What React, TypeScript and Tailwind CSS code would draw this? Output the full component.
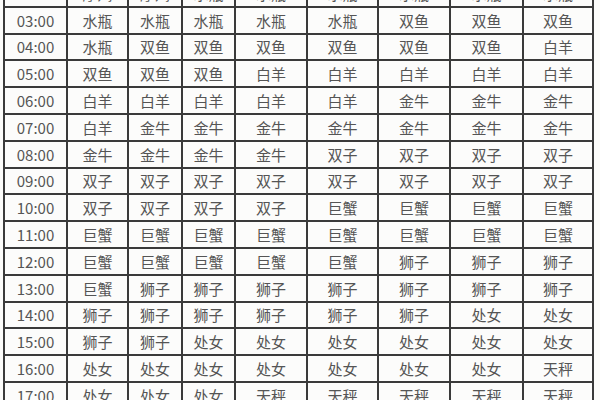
import React from "react";

const cols = ["w-[61px]", "w-[59px]", "w-[52px]", "w-[51px]", "w-[70px]", "w-[69px]", "w-[70px]", "w-[71px]", "w-[68px]"];

const rows: [string, string[]][] = [
  ["02:00", ["摩羯", "摩羯", "水瓶", "水瓶", "水瓶", "水瓶", "水瓶", "水瓶"]],
  ["03:00", ["水瓶", "水瓶", "水瓶", "水瓶", "水瓶", "双鱼", "双鱼", "双鱼"]],
  ["04:00", ["水瓶", "双鱼", "双鱼", "双鱼", "双鱼", "双鱼", "双鱼", "白羊"]],
  ["05:00", ["双鱼", "双鱼", "双鱼", "白羊", "白羊", "白羊", "白羊", "白羊"]],
  ["06:00", ["白羊", "白羊", "白羊", "白羊", "白羊", "金牛", "金牛", "金牛"]],
  ["07:00", ["白羊", "金牛", "金牛", "金牛", "金牛", "金牛", "金牛", "金牛"]],
  ["08:00", ["金牛", "金牛", "金牛", "金牛", "双子", "双子", "双子", "双子"]],
  ["09:00", ["双子", "双子", "双子", "双子", "双子", "双子", "双子", "双子"]],
  ["10:00", ["双子", "双子", "双子", "双子", "巨蟹", "巨蟹", "巨蟹", "巨蟹"]],
  ["11:00", ["巨蟹", "巨蟹", "巨蟹", "巨蟹", "巨蟹", "巨蟹", "巨蟹", "巨蟹"]],
  ["12:00", ["巨蟹", "巨蟹", "巨蟹", "巨蟹", "巨蟹", "狮子", "狮子", "狮子"]],
  ["13:00", ["巨蟹", "狮子", "狮子", "狮子", "狮子", "狮子", "狮子", "狮子"]],
  ["14:00", ["狮子", "狮子", "狮子", "狮子", "狮子", "狮子", "处女", "处女"]],
  ["15:00", ["狮子", "狮子", "处女", "处女", "处女", "处女", "处女", "处女"]],
  ["16:00", ["处女", "处女", "处女", "处女", "处女", "处女", "处女", "天秤"]],
  ["17:00", ["处女", "处女", "处女", "天秤", "天秤", "天秤", "天秤", "天秤"]],
];

export default function App() {
  return (
    <div
      className="w-[600px] h-[400px] overflow-hidden bg-[#fbfbf9] text-[#555] text-[15px] leading-none"
      style={{ fontFamily: '"Noto Sans CJK SC", "Noto Sans", sans-serif' }}
    >
      <div className="ml-[3px] mt-[-21px] w-fit bg-[#3a3a3a] p-[2px] flex flex-col gap-[2px]">
        {rows.map(([t, vals]) => (
          <div key={t} className="flex gap-[2px]">
            {[t, ...vals].map((v, i) => (
              <div
                key={i}
                className={`${cols[i]} h-[24.8px] bg-[#fcfcfb] flex items-center justify-center`}
              >
                {v}
              </div>
            ))}
          </div>
        ))}
      </div>
    </div>
  );
}
